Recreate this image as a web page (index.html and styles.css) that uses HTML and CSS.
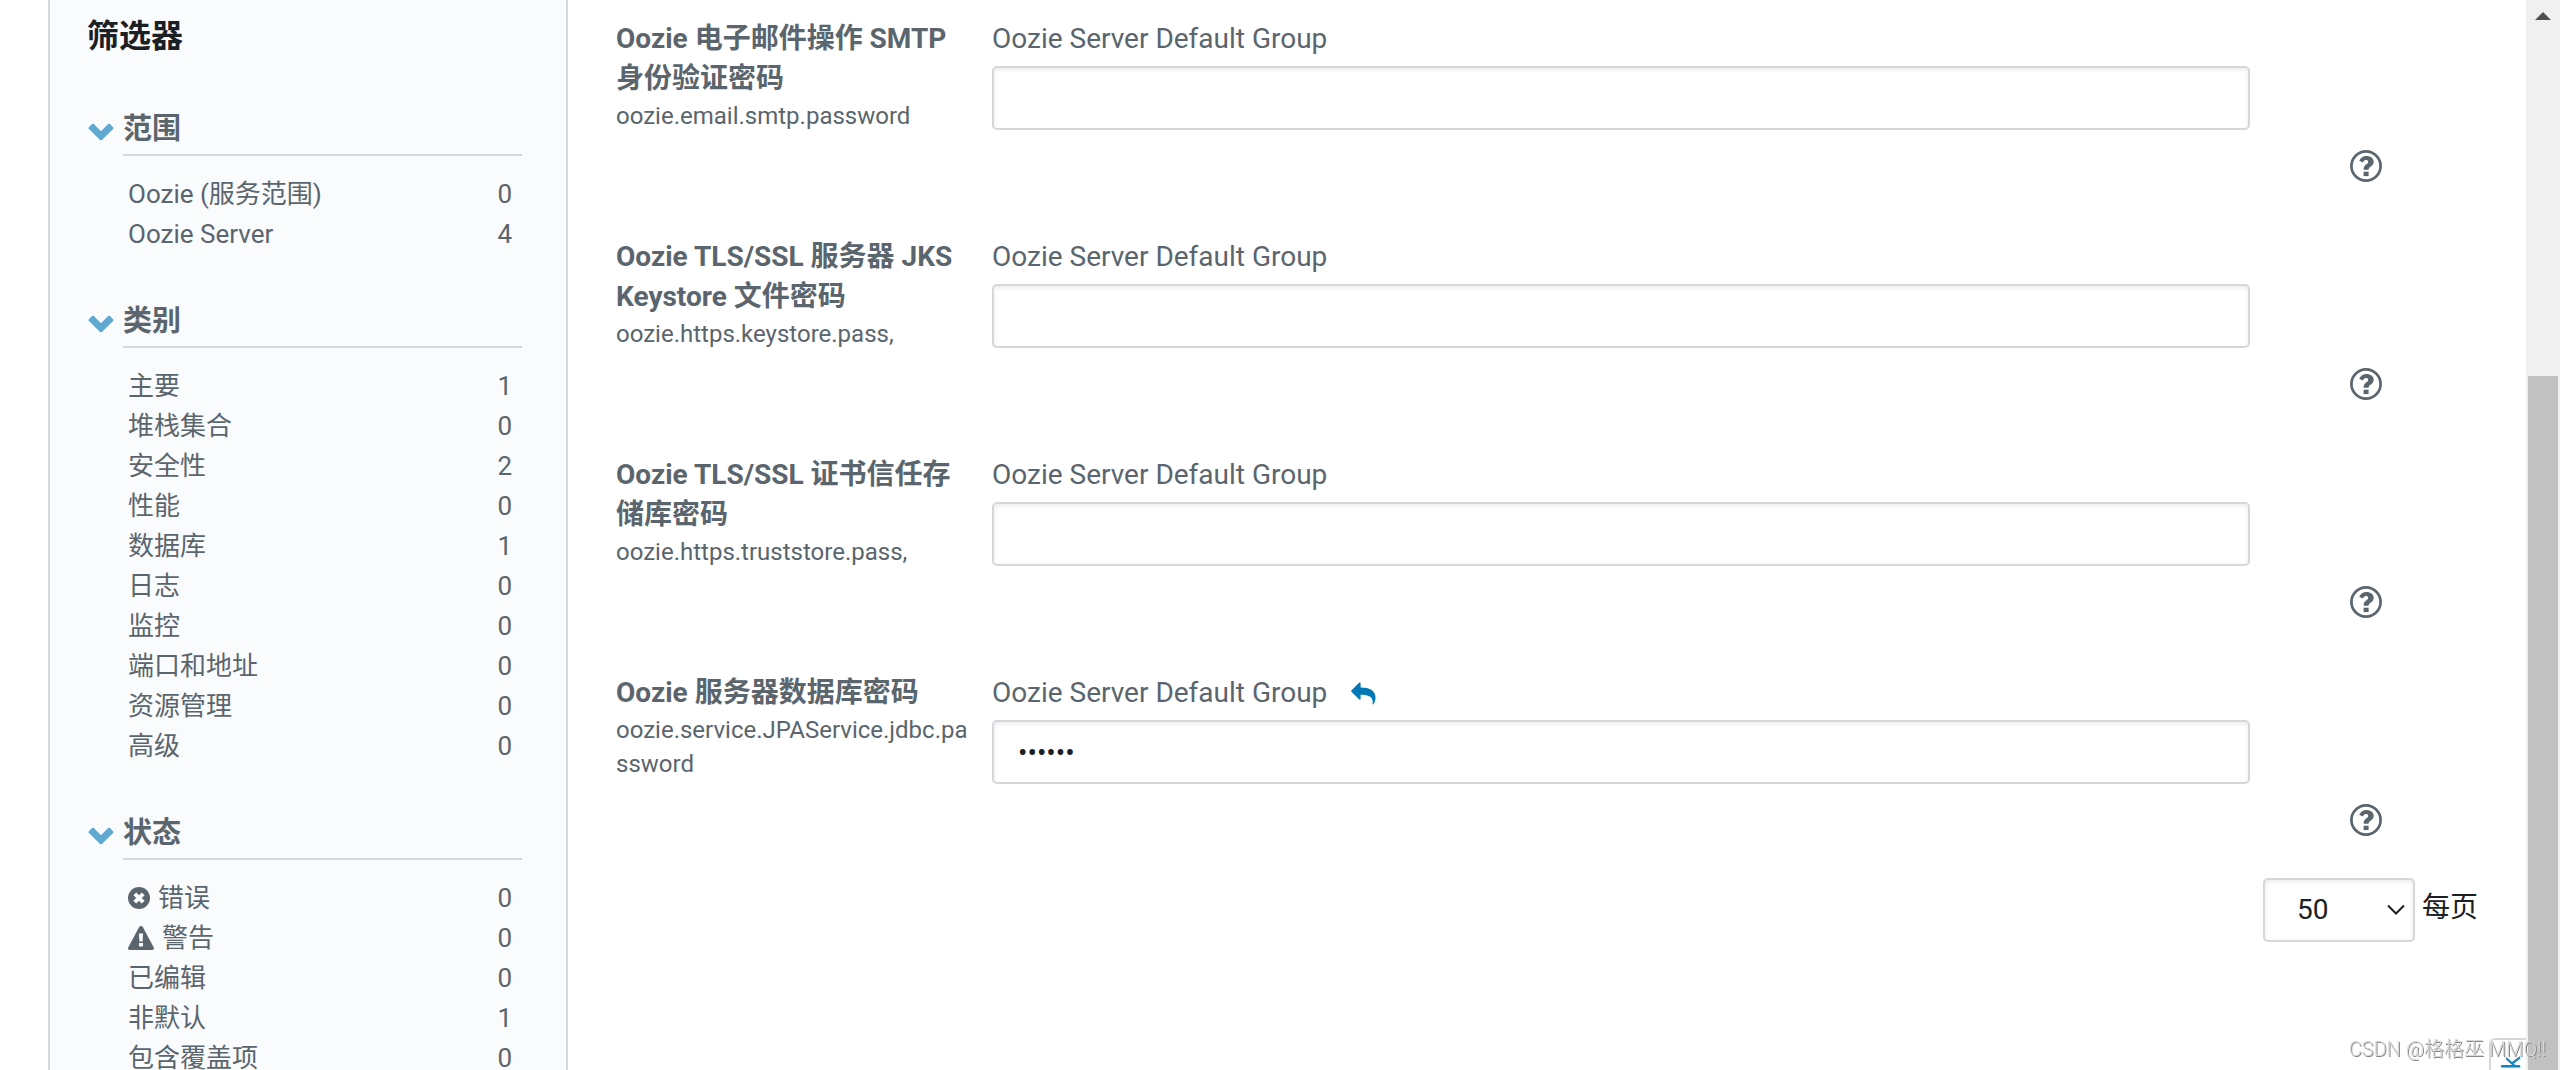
FILE: index.html
```html
<!DOCTYPE html>
<html lang="zh-CN">
<head>
<meta charset="utf-8">
<title>Oozie 配置</title>
<link rel="stylesheet" href="styles.css">
</head>
<body>
<svg class="sprite" aria-hidden="true">
  <symbol id="chevron" viewBox="0 0 26 20"><path d="M11.800 17.700.9 7c-.6-.6-.6-1.200 0-1.800L4 2.100c.6-.6 1.200-.6 1.800 0L13 9.200l7.200-7.100c.6-.6 1.200-.6 1.800 0l3.100 3.100c.6.6.6 1.200 0 1.800L14.200 17.700c-.8.800-1.600.8-2.400 0z"/></symbol>
  <symbol id="help" viewBox="0 0 32 32">
    <circle cx="16" cy="16" r="14.600" fill="none" stroke="currentColor" stroke-width="2.700"/>
    <path d="M9.200 10.800C10.600 7.400 13.200 5.900 16.500 5.900c4 0 7.200 2.200 7.200 5.900 0 4.900-5.100 4.700-5.100 7.900h-5c0-5.600 4.600-5.300 4.600-7.800 0-1.200-.9-1.800-2.200-1.800-1.600 0-2.400.9-3.200 2.500z"/>
    <path d="M13.600 21.700h5v4.400h-5z"/>
  </symbol>
</svg>
<div class="page">
  <aside class="filters">
    <h2 class="filters-title">筛选器</h2>
    <section class="filter">
      <h3 class="filter-head"><svg class="chevron"><use href="#chevron"/></svg><span class="filter-name">范围</span></h3>
      <ul class="filter-list">
        <li><span>Oozie (服务范围)</span><span>0</span></li>
        <li><span>Oozie Server</span><span>4</span></li>
      </ul>
    </section>
    <section class="filter">
      <h3 class="filter-head"><svg class="chevron"><use href="#chevron"/></svg><span class="filter-name">类别</span></h3>
      <ul class="filter-list">
        <li><span>主要</span><span>1</span></li>
        <li><span>堆栈集合</span><span>0</span></li>
        <li><span>安全性</span><span>2</span></li>
        <li><span>性能</span><span>0</span></li>
        <li><span>数据库</span><span>1</span></li>
        <li><span>日志</span><span>0</span></li>
        <li><span>监控</span><span>0</span></li>
        <li><span>端口和地址</span><span>0</span></li>
        <li><span>资源管理</span><span>0</span></li>
        <li><span>高级</span><span>0</span></li>
      </ul>
    </section>
    <section class="filter">
      <h3 class="filter-head"><svg class="chevron"><use href="#chevron"/></svg><span class="filter-name">状态</span></h3>
      <ul class="filter-list">
        <li><span class="with-icon"><svg class="icon-error" viewBox="0 0 22 26"><circle cx="11" cy="13" r="11"/><path d="M6.800 8.800l8.400 8.400M15.200 8.800l-8.400 8.400" stroke="#fafbfd" stroke-width="4"/></svg>错误</span><span>0</span></li>
        <li><span class="with-icon"><svg class="icon-warning" viewBox="0 0 26 28"><path d="M13 2c.8 0 1.400.4 1.800 1l11 20.500c.5 1.200-.2 2.500-1.500 2.500H1.700C.4 26-.3 24.700.2 23.500L11.200 3c.4-.6 1-1 1.800-1z"/><path d="M10.900 9.500h4.200l-.5 8h-3.200zM11 19h4v3.500h-4z" fill="#fafbfd"/></svg>警告</span><span>0</span></li>
        <li><span>已编辑</span><span>0</span></li>
        <li><span>非默认</span><span>1</span></li>
        <li><span>包含覆盖项</span><span>0</span></li>
      </ul>
    </section>
  </aside>

  <main class="settings">
    <div class="setting">
      <div class="setting-label"><label for="smtp">Oozie 电子邮件操作 SMTP 身份验证密码</label><p class="property">oozie.email.smtp.password</p></div>
      <div class="setting-value"><p class="group">Oozie Server Default Group</p><input class="field" id="smtp" type="password"></div>
      <button class="help" type="button" aria-label="帮助"><svg><use href="#help"/></svg></button>
    </div>
    <div class="setting">
      <div class="setting-label"><label for="keystore">Oozie TLS/SSL 服务器 JKS Keystore 文件密码</label><p class="property">oozie.https.keystore.pass,</p></div>
      <div class="setting-value"><p class="group">Oozie Server Default Group</p><input class="field" id="keystore" type="password"></div>
      <button class="help" type="button" aria-label="帮助"><svg><use href="#help"/></svg></button>
    </div>
    <div class="setting">
      <div class="setting-label"><label for="truststore">Oozie TLS/SSL 证书信任存储库密码</label><p class="property">oozie.https.truststore.pass,</p></div>
      <div class="setting-value"><p class="group">Oozie Server Default Group</p><input class="field" id="truststore" type="password"></div>
      <button class="help" type="button" aria-label="帮助"><svg><use href="#help"/></svg></button>
    </div>
    <div class="setting">
      <div class="setting-label"><label for="database">Oozie 服务器数据库密码</label><p class="property">oozie.service.JPAService.jdbc.password</p></div>
      <div class="setting-value"><p class="group">Oozie Server Default Group<button class="undo" type="button" aria-label="重置"><svg viewBox="0 0 26 24"><path d="M.4 9.400 8.400 1.400c.8-.8 1.600-.4 1.600.6v4.200C20 6.200 25.500 9.500 25.500 17c0 2.500-.8 4.800-2.200 6.600-.4.500-.9.300-.8-.3C23.500 16.500 19 13.800 10 13.800V18c0 1-.8 1.400-1.600.6l-8-8c-.4-.4-.4-.8 0-1.200z"/></svg></button></p><input class="field" id="database" type="password" value="secret"></div>
      <button class="help" type="button" aria-label="帮助"><svg><use href="#help"/></svg></button>
    </div>
    <div class="pager">
      <div class="select-box">
        <select class="field page-size" id="page-size"><option>50</option></select>
        <svg class="select-arrow" viewBox="0 0 18 12"><path d="M1 1.500l8 8 8-8" fill="none" stroke="#1b2025" stroke-width="2"/></svg>
      </div>
      <label for="page-size">每页</label>
    </div>
  </main>

  <div class="scrollbar"><svg class="scroll-arrow" viewBox="0 0 16 8"><path d="M8 0l8 8H0z"/></svg><div class="thumb"></div></div>
</div>
<a class="feedback" href="#">Feedback</a>
<div class="watermark">CSDN @格格巫 MMQ!!</div>
</body>
</html>
```

FILE: styles.css
```css
* { box-sizing: border-box; }

body {
  margin: 0;
  background: #fff;
  color: #5a656d;
  font: 28px/40px Roboto, "Noto Sans CJK SC", sans-serif;
}

h2, h3, p, ul { margin: 0; padding: 0; }
button { padding: 0; border: 0; background: none; color: inherit; cursor: pointer; }
svg { display: block; fill: currentColor; }
.sprite { display: none; }

.page {
  display: grid;
  grid-template-columns: 520px 1fr 34px;
  height: 100vh;
  padding-left: 48px;
  overflow: hidden;
}

/* Filter column */
.filters {
  padding: 12px 44px 0 37px;
  border: solid #d5d7da;
  border-width: 0 2px;
  background: #fafbfd;
}
.filters-title {
  margin-bottom: 48px;
  color: #1b2025;
  font-size: 32px;
  line-height: 48px;
}
.filter { margin-bottom: 46px; }
.filter-head {
  display: flex;
  align-items: center;
  gap: 8px;
  font-size: 29px;
  line-height: 42px;
}
.chevron { width: 28px; height: 20px; color: #60a9d0; }
.filter-name {
  flex: 1;
  padding-bottom: 4px;
  border-bottom: 2px solid #d5d7da;
}
.filter-list {
  padding: 18px 10px 0 41px;
  list-style: none;
  font-size: 26px;
}
.filter-list li { display: flex; justify-content: space-between; height: 40px; }
.with-icon { display: flex; align-items: center; gap: 8px; }
.icon-error { width: 22px; height: 26px; }
.icon-warning { width: 26px; height: 28px; }

/* Settings */
.settings { padding: 19px 0 0 48px; }
.setting {
  display: grid;
  grid-template-columns: 352px 1fr 252px;
  column-gap: 24px;
  height: 206px;
  margin-bottom: 12px;
}
.setting:nth-child(4) { margin-bottom: 0; }
.setting-label { overflow-wrap: anywhere; }
.setting-label label { display: block; font-weight: 700; }
.property { font-size: 24px; line-height: 34px; }
.group { display: flex; align-items: center; gap: 24px; margin-bottom: 7px; }
.field {
  width: 100%;
  height: 64px;
  padding: 0 24px;
  border: 2px solid #d6d6dc;
  border-radius: 5px;
  background: #fff;
  box-shadow: inset 0 2px 4px rgba(0, 0, 0, .08);
  color: #1b2025;
  font: inherit;
}
.undo { color: #0078b5; }
.undo svg { width: 25px; height: 24px; }
.help { justify-self: start; align-self: start; margin: 131px 0 0 76px; }
.help svg { width: 32px; height: 32px; }

.pager {
  display: flex;
  justify-content: flex-end;
  gap: 7px;
  padding-right: 48px;
  margin-top: -1px;
  color: #1b2025;
  line-height: 60px;
}
.select-box { position: relative; width: 152px; }
.page-size { appearance: none; padding: 0 32px; }
.select-arrow {
  position: absolute;
  top: 26px;
  right: 10px;
  width: 18px;
  height: 12px;
  pointer-events: none;
}

/* Page scrollbar */
.scrollbar {
  display: flex;
  flex-direction: column;
  gap: 356px;
  padding: 12px 2px 0;
  background: #f0f0f0;
}
.scroll-arrow { width: 16px; height: 8px; margin: 0 7px; color: #505050; }
.thumb { flex: 1; background: #c1c1c1; }

/* Side tab and page mark */
.feedback {
  position: fixed;
  right: 34px;
  bottom: -118px;
  width: 37px;
  height: 150px;
  padding: 16px 0;
  border: 2px solid #d6d6dc;
  border-right: 0;
  border-radius: 6px 0 0 6px;
  background: #fff;
  color: #1585bb;
  font-size: 26px;
  line-height: 40px;
  text-align: right;
  text-decoration: none;
  writing-mode: sideways-lr;
}
.watermark {
  position: fixed;
  right: 14px;
  bottom: 6px;
  color: #d8d8d8;
  font-size: 20px;
  font-weight: 300;
  line-height: 30px;
  text-shadow: 1px 1px 0 #858585;
}
```
